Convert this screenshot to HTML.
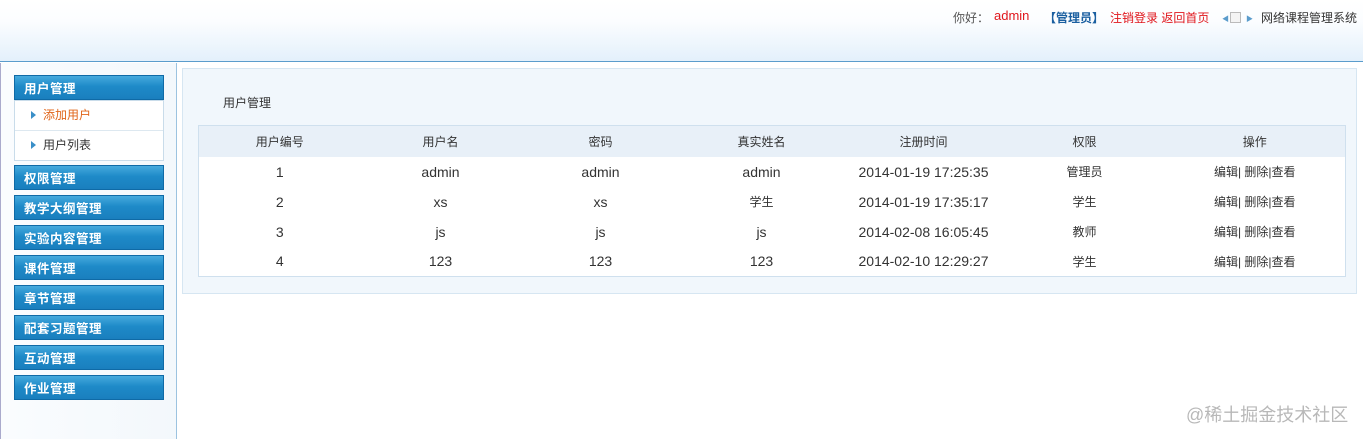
<!DOCTYPE html>
<html><head><meta charset="utf-8"><style>
*{margin:0;padding:0;box-sizing:border-box}
body{width:1363px;height:439px;overflow:hidden;background:#fff;font-family:"Liberation Sans","Noto Sans CJK SC",sans-serif;font-size:12px;color:#333;position:relative}
.hdr{position:absolute;left:0;top:0;width:1363px;height:62px;background:linear-gradient(#fff 0%,#fbfdff 35%,#e3f0fb 100%);border-bottom:1px solid #5a9ccc}
.top{position:absolute;top:9px;font-size:12px;white-space:nowrap}
.side{position:absolute;left:0;top:63px;width:177px;height:376px;background:linear-gradient(90deg,#fafcfe,#f3f8fc);border-right:1px solid #9cc3e0;border-left:1px solid #aac}
.m{position:absolute;left:14px;width:150px;height:25px;background:linear-gradient(#46a9dd,#1e8ac8 45%,#1a7fbe);border:1px solid #0f6aa6;color:#fff;font-weight:bold;font-size:12.5px;line-height:27px;padding-left:9px;letter-spacing:.5px}
.sub{position:absolute;left:14px;top:100px;width:150px;height:61px;background:#fff;border:1px solid #c9dcea}
.sub div{height:30px;line-height:29px;padding-left:28px;position:relative}
.sub div:first-child{border-bottom:1px solid #dde8f0;color:#e0651a}
.sub div:before{content:"";position:absolute;left:16px;top:10px;border-left:5px solid #3a8fc8;border-top:4px solid transparent;border-bottom:4px solid transparent}
.panel{position:absolute;left:182px;top:68px;width:1175px;height:226px;background:#f1f7fc;border:1px solid #d6e6f2}
table{position:absolute;left:198px;top:125px;width:1148px;border-collapse:collapse;background:#fff;border:1px solid #cfe0ee}
th{height:31px;background:#e8f0f8;font-weight:normal;color:#333}
td{height:30px;text-align:center;color:#333;font-size:14px}
td.c{font-size:12px}
</style></head><body>
<div class="hdr"></div>
<div class="top" style="left:953px;color:#555">你好：</div>
<div class="top" style="left:994px;color:#e0161c;font-size:13px;top:8px">admin</div>
<div class="top" style="left:1044px;color:#1a5fa0;font-weight:bold">【管理员】</div>
<div class="top" style="left:1110px;color:#e0161c">注销登录 返回首页</div>
<div class="top" style="left:1222px;color:#5a9ccc;font-size:7px;top:14px">◀</div>
<div style="position:absolute;left:1230px;top:12px;width:11px;height:11px;border:1px solid #bbb;background:#f4f4f4"></div>
<div class="top" style="left:1246px;color:#5a9ccc;font-size:7px;top:14px">▶</div>
<div class="top" style="left:1261px;color:#333">网络课程管理系统</div>
<div class="side"></div>
<div class="m" style="top:75px">用户管理</div>
<div class="sub"><div>添加用户</div><div>用户列表</div></div>
<div class="m" style="top:165px">权限管理</div>
<div class="m" style="top:195px">教学大纲管理</div>
<div class="m" style="top:225px">实验内容管理</div>
<div class="m" style="top:255px">课件管理</div>
<div class="m" style="top:285px">章节管理</div>
<div class="m" style="top:315px">配套习题管理</div>
<div class="m" style="top:345px">互动管理</div>
<div class="m" style="top:375px">作业管理</div>
<div class="panel"></div>
<div style="position:absolute;left:223px;top:94px">用户管理</div>
<table>
<tr><th style="width:162px">用户编号</th><th style="width:160px">用户名</th><th style="width:160px">密码</th><th style="width:162px">真实姓名</th><th style="width:162px">注册时间</th><th style="width:160px">权限</th><th>操作</th></tr>
<tr><td>1</td><td>admin</td><td>admin</td><td>admin</td><td>2014-01-19 17:25:35</td><td class="c">管理员</td><td class="c">编辑| 删除|查看</td></tr>
<tr><td>2</td><td>xs</td><td>xs</td><td class="c">学生</td><td>2014-01-19 17:35:17</td><td class="c">学生</td><td class="c">编辑| 删除|查看</td></tr>
<tr><td>3</td><td>js</td><td>js</td><td>js</td><td>2014-02-08 16:05:45</td><td class="c">教师</td><td class="c">编辑| 删除|查看</td></tr>
<tr><td>4</td><td>123</td><td>123</td><td>123</td><td>2014-02-10 12:29:27</td><td class="c">学生</td><td class="c">编辑| 删除|查看</td></tr>
</table>
<div style="position:absolute;left:1186px;top:401px;font-size:18px;color:#b8b8b8">@稀土掘金技术社区</div>
</body></html>
